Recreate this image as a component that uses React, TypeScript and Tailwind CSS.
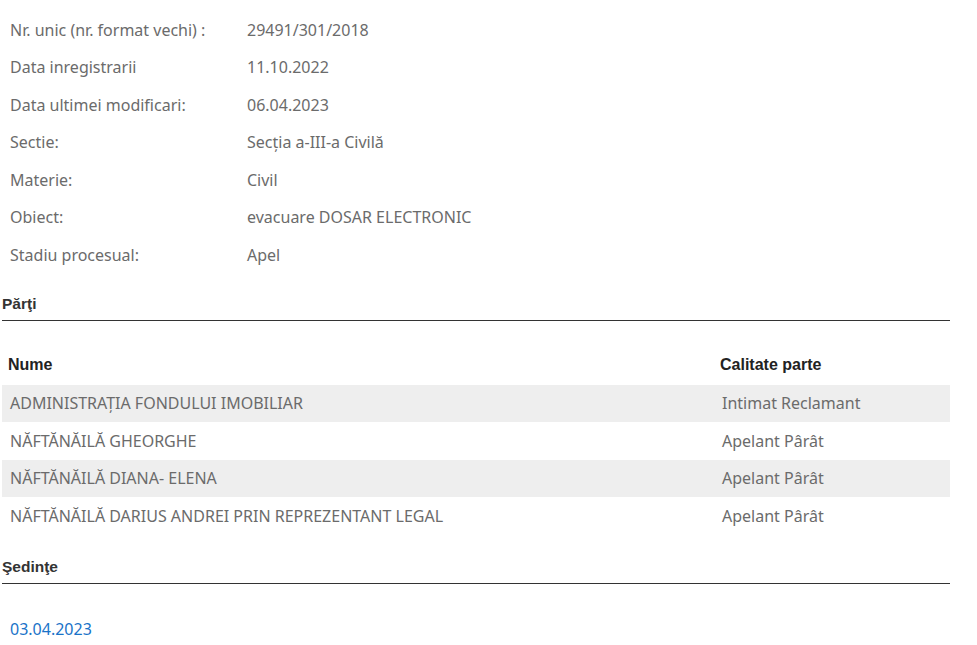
const INFO = [
  ['Nr. unic (nr. format vechi) :', '29491/301/2018'],
  ['Data inregistrarii', '11.10.2022'],
  ['Data ultimei modificari:', '06.04.2023'],
  ['Sectie:', 'Secția a-III-a Civilă'],
  ['Materie:', 'Civil'],
  ['Obiect:', 'evacuare DOSAR ELECTRONIC'],
  ['Stadiu procesual:', 'Apel'],
];

const PARTI = [
  ['ADMINISTRAȚIA FONDULUI IMOBILIAR', 'Intimat Reclamant'],
  ['NĂFTĂNĂILĂ GHEORGHE', 'Apelant Pârât'],
  ['NĂFTĂNĂILĂ DIANA- ELENA', 'Apelant Pârât'],
  ['NĂFTĂNĂILĂ DARIUS ANDREI PRIN REPREZENTANT LEGAL', 'Apelant Pârât'],
];

export default function App() {
  return (
    <div className="w-[977px] h-[645px] bg-white overflow-hidden font-['Noto_Sans',sans-serif] text-[16px] text-[#6b6b6b]">
      <div className="pl-[2px] pr-[27px] pt-[11px]">
        {/* Detalii dosar */}
        <div className="flex flex-col">
          {INFO.map(([label, value], i) => (
            <div key={i} className="flex h-[37.5px] items-center">
              <div className="w-[245px] pl-2">{label}</div>
              <div>{value}</div>
            </div>
          ))}
        </div>

        {/* Parti */}
        <h3 className="mt-[20px] font-['Liberation_Sans',sans-serif] font-bold text-[15.5px] text-[#333] leading-[20px] pb-[6px] border-b border-[#333]">
          Părţi
        </h3>
        <div className="mt-[24px]">
          <div className="flex h-[40px] items-center font-['Liberation_Sans',sans-serif] font-bold text-[16px] text-[#222]">
            <div className="flex-1 pl-[6px]">Nume</div>
            <div className="w-[231px] pl-[1px]">Calitate parte</div>
          </div>
          {PARTI.map(([nume, calitate], i) => (
            <div key={i} className={`flex h-[37.5px] items-center ${i % 2 === 0 ? 'bg-[#eeeeee]' : ''}`}>
              <div className="flex-1 pl-2">{nume}</div>
              <div className="w-[231px] pl-[3px]">{calitate}</div>
            </div>
          ))}
        </div>

        {/* Sedinte */}
        <h3 className="mt-[22px] font-['Liberation_Sans',sans-serif] font-bold text-[15.5px] text-[#333] leading-[20px] pb-[6px] border-b border-[#333]">
          Şedinţe
        </h3>
        <div className="mt-[33px] pl-2 text-[#1a73c8]">03.04.2023</div>
      </div>
    </div>
  );
}
